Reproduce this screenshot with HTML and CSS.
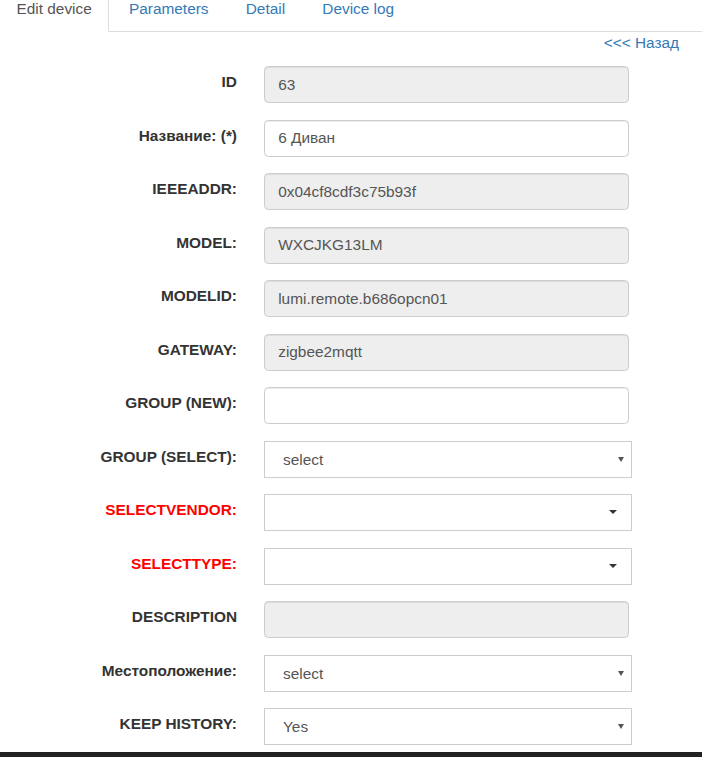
FILE: index.html
```html
<!DOCTYPE html>
<html lang="ru">
<head>
<meta charset="utf-8">
<title>Edit device</title>
<link rel="stylesheet" href="styles.css">
</head>
<body>
<ul class="tabs">
  <li class="tab active"><a>Edit device</a></li>
  <li class="tab"><a>Parameters</a></li>
  <li class="tab"><a>Detail</a></li>
  <li class="tab"><a>Device log</a></li>
</ul>
<div class="back"><a>&lt;&lt;&lt; Назад</a></div>
<form class="form">
  <div class="row"><label class="lbl">ID</label><input class="ctl ro" value="63" readonly></div>
  <div class="row"><label class="lbl">Название: (*)</label><input class="ctl" value="6 Диван"></div>
  <div class="row"><label class="lbl">IEEEADDR:</label><input class="ctl ro" value="0x04cf8cdf3c75b93f" readonly></div>
  <div class="row"><label class="lbl">MODEL:</label><input class="ctl ro" value="WXCJKG13LM" readonly></div>
  <div class="row"><label class="lbl">MODELID:</label><input class="ctl ro" value="lumi.remote.b686opcn01" readonly></div>
  <div class="row"><label class="lbl">GATEWAY:</label><input class="ctl ro" value="zigbee2mqtt" readonly></div>
  <div class="row"><label class="lbl">GROUP (NEW):</label><input class="ctl" value=""></div>
  <div class="row"><label class="lbl">GROUP (SELECT):</label>
    <div class="selwrap"><select class="sel"><option>select</option></select>
      <svg class="arrow" width="6" height="5" viewBox="0 0 6 5"><path d="M0 0H6L3 5Z" fill="#555"/></svg></div></div>
  <div class="row"><label class="lbl req">SELECTVENDOR:</label>
    <div class="bsel"><span class="caret"></span></div></div>
  <div class="row"><label class="lbl req">SELECTTYPE:</label>
    <div class="bsel"><span class="caret"></span></div></div>
  <div class="row"><label class="lbl">DESCRIPTION</label><input class="ctl ro" value="" readonly></div>
  <div class="row"><label class="lbl">Местоположение:</label>
    <div class="selwrap"><select class="sel"><option>select</option></select>
      <svg class="arrow" width="6" height="5" viewBox="0 0 6 5"><path d="M0 0H6L3 5Z" fill="#555"/></svg></div></div>
  <div class="row"><label class="lbl">KEEP HISTORY:</label>
    <div class="selwrap"><select class="sel"><option>Yes</option></select>
      <svg class="arrow" width="6" height="5" viewBox="0 0 6 5"><path d="M0 0H6L3 5Z" fill="#555"/></svg></div></div>
</form>
<div class="footer"></div>
</body>
</html>
```
FILE: styles.css
```css
html, body {
  margin: 0;
  padding: 0;
  overflow: hidden;
  height: 757px;
}
body {
  font-family: "Liberation Sans", Arial, sans-serif;
  font-size: 15.4px;
  line-height: 22px;
  color: #333;
  background: #fff;
}
.tabs {
  list-style: none;
  margin: -14px 0 0 0;
  padding: 0;
  display: flex;
  border-bottom: 1px solid #ddd;
}
.tab {
  margin-right: 2.2px;
  margin-bottom: -1px;
}
.tab a {
  display: block;
  padding: 11px 16.5px;
  line-height: 22px;
  color: #337ab7;
  border: 1px solid transparent;
}
.tab.active a {
  color: #555;
  background: #fff;
  border-color: #ddd;
  border-bottom-color: transparent;
  border-left: none;
}
.back {
  text-align: right;
  padding-right: 23px;
  line-height: 22px;
}
.back a {
  color: #337ab7;
}
.form {
  margin: 12px 0 0 0;
  display: flex;
  flex-direction: column;
  gap: 16.5px;
}
.row {
  display: grid;
  grid-template-columns: 237px auto;
  column-gap: 27px;
  align-items: start;
}
.lbl {
  text-align: right;
  font-weight: bold;
  padding-top: 5px;
  line-height: 22px;
}
.lbl.req {
  color: #f00;
}
.ctl {
  box-sizing: border-box;
  width: 365px;
  height: 37px;
  padding: 6.6px 13.2px;
  font-family: "Liberation Sans", Arial, sans-serif;
  font-size: 15.4px;
  line-height: 22px;
  color: #555;
  background: #fff;
  border: 1px solid #ccc;
  border-radius: 4.4px;
  box-shadow: inset 0 1px 1px rgba(0,0,0,.075);
  margin: 0;
  outline: none;
}
.ctl.ro {
  background: #eee;
}
.selwrap {
  position: relative;
  width: 368px;
  height: 37px;
}
.sel {
  -webkit-appearance: none;
  appearance: none;
  box-sizing: border-box;
  width: 368px;
  height: 37px;
  margin: 0;
  padding: 0 24px 0 18px;
  font-family: "Liberation Sans", Arial, sans-serif;
  font-size: 15.4px;
  color: #555;
  background: #fff;
  border: 1px solid #ccc;
  border-radius: 0;
  outline: none;
}
.arrow {
  position: absolute;
  right: 8px;
  top: 16px;
}
.bsel {
  position: relative;
  box-sizing: border-box;
  width: 368px;
  height: 37px;
  background: #fff;
  border: 1px solid #ccc;
}
.caret {
  position: absolute;
  right: 14px;
  top: 15px;
  width: 0;
  height: 0;
  border-top: 4px solid #333;
  border-left: 4px solid transparent;
  border-right: 4px solid transparent;
}
.footer {
  margin-top: 7px;
  height: 6px;
  background: #222;
}
```
